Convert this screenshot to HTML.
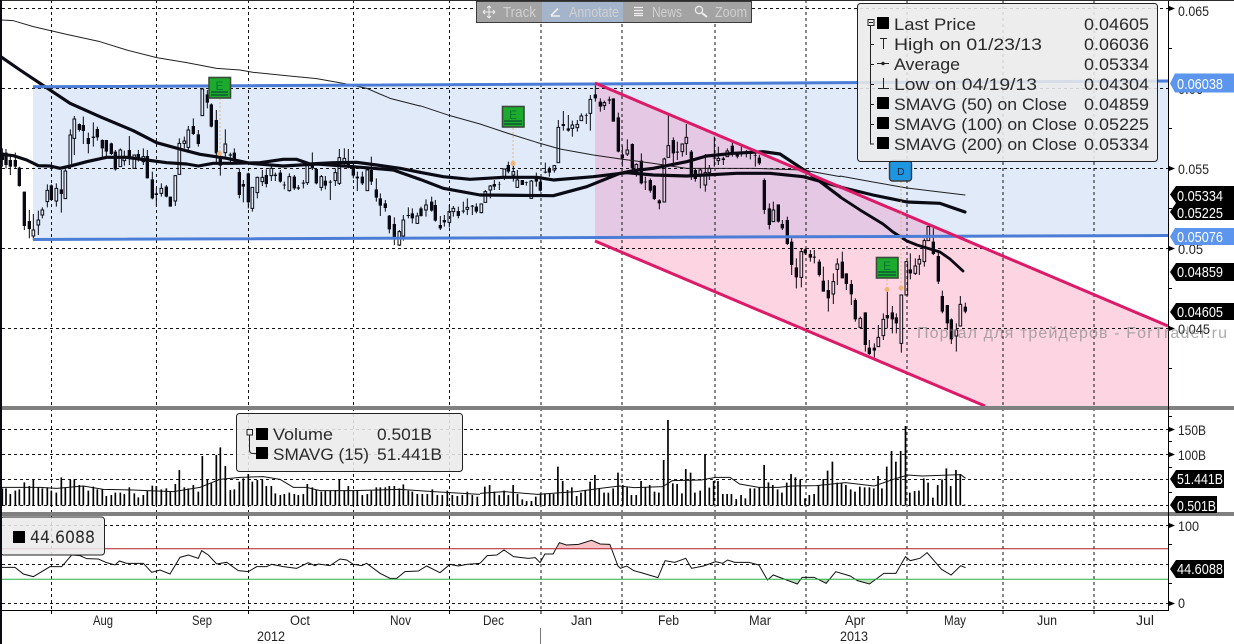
<!DOCTYPE html>
<html><head><meta charset="utf-8"><style>
html,body{margin:0;padding:0;background:#fff;width:1234px;height:644px;overflow:hidden}
svg{display:block}
text{font-family:"Liberation Sans","DejaVu Sans",sans-serif}
.l{font-size:17px;fill:#2a2a2a;font-family:"DejaVu Sans","Liberation Sans",sans-serif}
.a{font-size:14px;fill:#222}
.t{font-size:15px;fill:#fff}
.x{font-size:13.5px;fill:#222}
.b{font-size:15px;fill:#d0d0d0}
.ma{fill:none;stroke-linejoin:round;stroke-linecap:round}
</style></head><body>
<svg width="1234" height="644" viewBox="0 0 1234 644" xmlns="http://www.w3.org/2000/svg">
<rect width="1234" height="644" fill="#fff"/>
<!-- grid -->
<g stroke="#000" stroke-width="1" stroke-dasharray="3 3" fill="none" opacity=".92">
<path d="M2 8.5H1168M2 88.5H1168M2 168.5H1168M2 248.5H1168M2 328.5H1168M2 429.5H1168M2 454.5H1168M2 479.5H1168M2 505.5H1168M2 525.5H1168M2 564.5H1168M2 603.5H1168"/>
<path d="M51.5 0V610M156.5 0V610M248.5 0V610M353.5 0V610M449.5 0V610M541 0V610M622 0V610M715 0V610M806 0V610M907 0V610M1003 0V610M1094 0V610"/>
</g>
<!-- main candles part 1 -->
<g transform="scale(.33333)" fill="none">
<path stroke="#0a0a14" stroke-width="3" d="M7 445V500M18 447V505M31 465V525M46 458V505M58 500V560M73 575V690M88 630V715M154 553V602M184 510V638M238 370V395M250 350V432M265 398V460M280 367V440M292 380V422M307 418V472M319 420V470M334 428V465M346 450V512M388 408V495M415 450V485M442 450V535M457 515V598M469 565V620M499 555V592M511 590V620M580 355V405M595 390V440M622 270V325M634 310V382M649 330V490M661 465V527M691 458V487M703 445V490M718 505V595M730 540V607M745 518V625M799 508V562M826 518V543M841 510V548M853 545V568M883 525V570M895 555V570M910 540V565M937 457V510M949 505V553M976 528V568M991 540V600M1045 447V505M1060 490V535M1072 515V573M1087 515V555M1114 470V555M1129 535V605M1141 580V648M1156 600V635M1168 645V700M1183 652V735M1225 622V655M1237 625V670
M100 642V690M100 708V720M115 632V660M115 675V705M127 622V630M127 645V655M142 553V571M142 605V622M169 550V565M169 603V620M196 505V513M211 388V405M211 497V505M223 348V357M223 415V465M361 445V450M373 452V473M373 482V497M430 445V470M430 485V495M484 550V565M484 580V590M526 525V527M526 603V618M538 415V430M553 410V423M553 430V445M565 378V390M565 442V450M607 265V267M676 388V432M676 458V470M757 625V635M772 530V532M772 578V595M787 510V532M787 545V558M814 495V505M814 527V543M868 520V530M868 572V575M922 495V497M922 548V555M964 525V530M964 562V572M1006 505V518M1006 542V558M1018 447V473M1018 550V555M1033 445V475M1033 487V495M1102 505V510M1198 690V695M1198 735V738M1210 645V660M1210 708V722M1252 638V648M1252 670V672"/>
<path stroke="#0a0a14" stroke-width="10" d="M7 458V480M18 458V495M31 480V500M46 480V500M58 503V558M73 575V678M88 663V687M154 556V600M184 568V582M238 372V390M250 375V393M265 414V432M280 410V414M292 387V412M307 420V445M319 420V455M334 430V462M346 455V508M388 450V470M415 462V473M442 468V535M457 538V595M469 580V585M499 560V590M511 590V620M580 378V402M595 403V432M622 283V308M634 313V380M649 360V460M661 470V497M691 463V467M703 458V480M718 516V585M730 552V560M745 520V607M799 525V552M826 524V528M841 518V545M853 554V556M883 530V565M895 562V566M910 548V551M937 488V505M949 507V550M976 542V557M991 545V548M1045 485V500M1060 503V527M1072 530V535M1087 530V550M1114 510V545M1129 568V593M1141 595V617M1156 610V624M1168 647V688M1183 672V712M1225 645V648M1237 640V655"/>
<path stroke="#0a0a14" stroke-width="3" d="M96 690h8V708h-8zM111 660h8V675h-8zM123 630h8V645h-8zM138 571h8V605h-8zM165 565h8V603h-8zM192 513h8V596h-8zM207 405h8V497h-8zM219 357h8V415h-8zM357 450h8V500h-8zM369 473h8V482h-8zM399 465h8V505h-8zM426 470h8V485h-8zM480 565h8V580h-8zM522 527h8V603h-8zM534 430h8V523h-8zM549 423h8V430h-8zM561 390h8V442h-8zM603 267h8V347h-8zM672 432h8V458h-8zM753 562h8V625h-8zM768 532h8V578h-8zM783 532h8V545h-8zM810 505h8V527h-8zM864 530h8V572h-8zM918 497h8V548h-8zM960 530h8V562h-8zM1002 518h8V542h-8zM1014 473h8V550h-8zM1029 475h8V487h-8zM1098 510h8V572h-8zM1194 695h8V735h-8zM1206 660h8V708h-8zM1248 648h8V670h-8z"/>
</g>
<!-- main candles part 2 -->
<g transform="translate(420 0) scale(.33333)" fill="none">
<path stroke="#0a0a14" stroke-width="3" d="M3 620V650M35 590V635M46 600V665M61 648V690M73 645V680M115 620V655M130 605V640M157 615V645M169 610V640M223 540V570M238 545V570M265 485V520M307 540V555M319 545V557M349 518V560M361 535V575M376 488V520M388 500V530M430 333V392M445 345V395M499 340V372M526 255V305M541 295V335M568 290V312M580 295V365M595 338V457M607 437V500M637 430V510M664 460V553M676 530V570M691 535V578M703 555V600M718 598V628M760 412V490M772 425V480M814 450V540M826 505V545M883 410V500M910 470V495M937 425V470M952 455V475M964 440V470M979 450V472M991 455V478M1006 460V500M1018 465V495M1033 535V642M1048 610V688M1075 615V668M1087 660V690M1102 650V735
M18 598V615M18 630V650M88 615V635M88 667V682M100 618V625M100 635V650M142 595V622M142 628V645M184 610V612M184 638V640M196 570V575M211 555V558M211 570V595M253 505V507M253 533V540M280 490V515M280 525V545M292 510V540M334 540V543M403 495V497M403 510V518M415 360V382M457 362V375M457 385V410M472 360V373M472 383V395M484 340V348M511 285V298M511 340V392M553 302V308M553 317V330M622 418V450M622 462V468M649 490V493M649 515V530M733 473V477M745 345V437M787 430V432M787 455V470M799 372V412M799 430V465M841 505V510M841 525V565M856 462V518M856 555V575M868 495V505M868 518V540M895 440V475M895 482V495M922 445V453M1060 605V630"/>
<path stroke="#0a0a14" stroke-width="10" d="M3 625V648M35 605V632M46 615V662M61 675V685M73 660V667M115 633V648M130 632V635M157 617V620M169 620V635M223 552V560M238 552V553M265 495V515M307 540V555M319 547V549M349 530V545M361 545V572M376 515V518M388 507V518M430 372V378M445 385V392M499 345V347M526 283V295M541 305V320M568 298V302M580 295V365M595 352V455M607 463V475M637 432V505M664 482V550M676 545V547M691 540V572M703 557V597M718 601V610M760 420V460M772 455V458M814 455V530M826 510V537M883 473V475M910 475V480M937 437V460M952 458V470M964 458V463M979 458V462M991 460V462M1006 465V467M1018 473V490M1033 540V630M1048 625V675M1075 613V665M1087 672V685M1102 660V732"/>
<path stroke="#0a0a14" stroke-width="3" d="M14 615h8V630h-8zM84 635h8V667h-8zM96 625h8V635h-8zM138 622h8V628h-8zM180 612h8V638h-8zM192 575h8V607h-8zM207 558h8V570h-8zM249 507h8V533h-8zM276 515h8V525h-8zM288 540h8V562h-8zM330 543h8V595h-8zM399 497h8V510h-8zM411 382h8V488h-8zM453 375h8V385h-8zM468 373h8V383h-8zM480 348h8V362h-8zM507 298h8V340h-8zM549 308h8V317h-8zM618 450h8V462h-8zM645 493h8V515h-8zM729 477h8V606h-8zM741 437h8V472h-8zM783 432h8V455h-8zM795 412h8V430h-8zM837 510h8V525h-8zM852 518h8V555h-8zM864 505h8V518h-8zM891 475h8V482h-8zM918 453h8V470h-8zM1056 630h8V665h-8z"/>
</g>
<!-- main candles part 3 -->
<g transform="translate(760 200) scale(.33333)" fill="none">
<path stroke="#0a0a14" stroke-width="3" d="M95 115V225M109 175V265M136 145V165M151 150V185M163 150V190M178 178V230M190 200V275M205 240V335M247 155V235M259 220V270M274 240V315M286 295V365M316 337V455M328 420V465M343 430V472M382 268V385M397 318V400M409 340V400M451 160V238M520 85V165M535 150V252M547 272V340M562 315V390M574 355V432M616 308V340
M124 145V155M124 232V262M220 220V245M220 282V312M232 175V192M232 208V255M301 350V355M301 382V385M355 375V412M370 340V358M370 407V420M424 430V458M439 183V185M466 175V198M466 220V225M478 165V178M478 192V225M493 115V122M493 185V200M589 370V390M589 408V455M601 288V313M601 378V380"/>
<path stroke="#0a0a14" stroke-width="10" d="M95 125V195M109 202V232M136 148V160M151 162V173M163 170V173M178 185V225M190 242V275M205 270V295M247 185V235M259 220V252M274 252V283M286 300V358M316 337V435M328 443V462M343 443V452M382 345V355M397 337V358M409 352V370M451 208V220M520 125V162M535 168V245M547 288V335M562 315V370M574 358V418M616 320V335"/>
<path stroke="#0a0a14" stroke-width="3" d="M120 155h8V232h-8zM216 245h8V282h-8zM228 192h8V208h-8zM297 355h8V382h-8zM351 412h8V440h-8zM366 358h8V407h-8zM420 285h8V430h-8zM435 185h8V285h-8zM462 198h8V220h-8zM474 178h8V192h-8zM489 122h8V185h-8zM501 80h8V122h-8zM585 390h8V408h-8zM597 313h8V378h-8z"/>
</g>
<!-- moving averages -->
<g class="ma">
<g transform="scale(.33333)" stroke="#222">
<polyline stroke-width="3" points="5,60 40,62 100,80 200,103 300,125 380,150 470,173 560,188 650,205 720,210 760,217 850,226 950,236 1030,250 1100,265 1170,295 1260,318"/>
</g>
<g transform="translate(420 0) scale(.33333)" stroke="#222">
<polyline stroke-width="3" points="0,317 90,347 180,372 270,402 350,427 420,447 520,465 610,478 700,490 800,505 1000,505 1150,510 1260,530"/>
</g>
<polyline stroke="#222" stroke-width="1" points="840,176 873,182 907,188 940,192 965,195"/>
<g stroke="#0c0c16" stroke-width="9.5">
<polyline transform="scale(.33333)" points="5,463 40,467 80,480 115,497 150,498 180,505 215,497 260,485 320,472 380,472 440,480 500,488 560,492 595,498 640,490 700,490 780,488 850,478 890,478 930,492 1000,488 1070,487 1130,495 1200,505 1260,517"/>
<polyline transform="translate(420 0) scale(.33333)" points="0,517 70,530 150,538 250,532 350,532 400,540 520,530 620,518 700,525 800,528 950,520 1050,520 1150,530 1260,560"/>
<polyline transform="scale(.33333)" points="5,172 60,210 120,250 210,310 300,350 400,392 470,428 550,450 600,463 680,475 750,490 850,498 950,492 1060,500 1180,510 1260,538"/>
<polyline transform="translate(420 0) scale(.33333)" points="0,538 70,565 180,585 400,587 500,560 600,520 640,512 700,505 800,485 860,468 940,460 1030,455 1080,462 1160,515 1220,560 1260,590"/>
<polyline transform="scale(.33333)" points="2520,561 2619,585 2721,606 2820,610 2895,636"/>
<polyline stroke-width="8.5" transform="scale(.33333)" points="2520,591 2580,630 2649,672 2679,696 2721,723 2751,735 2820,756 2850,777 2889,813"/>
</g>
</g>
<!-- blue channel (without pink overlap) -->
<polygon points="33,87 595,84 595,237.8 33,240" fill="#e0eaf9" style="mix-blend-mode:multiply"/>
<polygon points="595,84 1168,81 1168,235.5 958,236.2 595,83" fill="#e0eaf9" style="mix-blend-mode:multiply"/>
<!-- overlap -->
<polygon points="595,83 958,236.2 595,237.8" fill="#e5c8e3" style="mix-blend-mode:multiply"/>
<!-- pink channel -->
<polygon points="595,237.8 958,236.2 1168,325 1168,406 985,406 595,241" fill="#fdd5e2" style="mix-blend-mode:multiply"/>
<path d="M33 86.8L1168 81M33 239.5L1168 235.5" stroke="#4c7dd6" stroke-width="3" fill="none"/>
<path d="M595 83L1168 326M595 241L985 406" stroke="#dc1a68" stroke-width="3" fill="none"/>
<!-- event connectors -->
<g stroke="#d9b98c" stroke-width="1" stroke-dasharray="2 2" fill="none"><path d="M220 98V153M513 128V164M887 279V289M901 181V288"/></g>
<g fill="#f0b678"><circle cx="219.5" cy="153.5" r="2.5"/><circle cx="513" cy="163.5" r="2.5"/><circle cx="887" cy="289.5" r="2.5"/><circle cx="901" cy="288" r="2.5"/></g>
<!-- events -->
<g>
<rect x="209" y="77.5" width="21.5" height="20.5" fill="#1cab2c" stroke="#3c4a3c" stroke-width="1.6"/><text x="215.5" y="90" font-size="12" fill="#073">E</text><path d="M211 92H228M211 95H228" stroke="#033" stroke-width="1"/>
<rect x="502.5" y="106.5" width="21.5" height="20.5" fill="#1cab2c" stroke="#3c4a3c" stroke-width="1.6"/><text x="509" y="119" font-size="12" fill="#073">E</text><path d="M504 121H522M504 124H522" stroke="#033" stroke-width="1"/>
<rect x="876.5" y="257.5" width="21.5" height="20.5" fill="#1cab2c" stroke="#3c4a3c" stroke-width="1.6"/><text x="883" y="270" font-size="12" fill="#073">E</text><path d="M878 272H896M878 275H896" stroke="#033" stroke-width="1"/>
<rect x="889.5" y="160.5" width="22" height="20.5" rx="3" fill="#1e96e2" stroke="#3a3a3a" stroke-width="1.4"/><text x="897" y="175" font-size="10.5" fill="#123">D</text>
</g>
<!-- volume bars -->
<g transform="translate(0 400) scale(.33333)" fill="none">
<path stroke="#000" stroke-width="5" d="M7 265V316M18 265V316M31 282V316M46 272V316M58 268V316M73 247V316M88 258V316M100 240V316M115 262V316M127 265V316M142 262V316M154 272V316M169 278V316M184 232V316M196 262V316M211 240V316M223 238V316M238 255V316M250 258V316M265 272V316M280 260V316M292 268V316M307 268V316M319 288V316M334 285V316M346 278V316M361 278V316M373 282V316M388 262V316M403 280V316M415 292V316M430 285V316M442 272V316M457 257V316M469 258V316M484 268V316M499 265V316M511 275V316M526 252V316M538 210V316M553 262V316M565 265V316M580 255V316M595 275V316M607 168V316M622 238V316M634 250V316M649 165V316M661 142V316M676 198V316M691 270V316M703 268V316M718 245V316M730 235V316M745 222V316M757 245V316M772 240V316M787 238V316M799 258V316M814 258V316M826 280V316M841 285V316M853 282V316M868 278V316M883 282V316M895 285V316M910 282V316M922 252V316M937 262V316M949 270V316M964 275V316M976 272V316M991 272V316M1006 270V316M1018 238V316M1033 272V316M1045 258V316M1060 272V316M1072 270V316M1087 285V316M1102 282V316M1114 272V316M1129 262V316M1141 262V316M1156 262V316M1168 258V316M1183 258V316M1198 265V316M1210 253V316M1225 272V316M1237 275V316M1252 282V316M1267 282V316M1282 282V316M1297 268V316M1312 285V316M1327 285V316M1342 272V316M1357 285V316M1372 288V316M1387 285V316M1402 275V316M1417 285V316M1432 290V316"/>
<polyline stroke="#111" stroke-width="3" points="5,262 60,262 120,262 170,265 250,258 310,268 400,270 440,272 520,275 600,262 660,238 720,232 790,230 840,238 880,262 920,262 960,272 1060,272 1200,268 1300,275 1440,283"/>
<polyline stroke="#111" stroke-width="3" points="5,502 45,502 70,522 100,530 150,500 185,500 215,465 240,467 260,476 295,477 320,488 345,495 358,483 380,490 430,490 455,517 480,510 510,522 540,472 565,465 595,475 605,452 625,465 650,492 680,487 715,512 745,515 770,500 800,500 815,493 850,500 890,505 925,488 945,497 955,492 990,497 1020,477 1040,480 1060,493 1085,497 1100,490 1140,520 1170,535 1190,535 1215,515 1255,513 1280,498 1320,518 1350,493 1375,498 1400,493 1440,490"/>
</g>
<g transform="translate(480 400) scale(.48077 .33333)" fill="none">
<path stroke="#000" stroke-width="3.5" d="M10 260V316M20 255V316M30 275V316M40 285V316M50 272V316M59 285V316M69 255V316M78 282V316M88 298V316M97 303V316M107 303V316M116 290V316M126 280V316M135 280V316M145 282V316M153 282V316M162 200V316M172 243V316M182 270V316M191 262V316M201 288V316M210 278V316M219 270V316M229 245V316M239 225V316M248 265V316M258 278V316M267 278V316M277 265V316M287 218V316M297 255V316M306 262V316M315 285V316M325 285V316M335 243V316M344 262V316M353 255V316M363 275V316M372 278V316M382 180V316M391 60V316M401 250V316M410 252V316M420 280V316M428 207V316M438 218V316M447 278V316M458 272V316M468 162V316M477 263V316M486 243V316M495 243V316M505 282V316M514 282V316M523 282V316M533 297V316M543 285V316M552 295V316M562 265V316M571 265V316M581 262V316M591 195V316M600 247V316M609 255V316M619 268V316M628 278V316M638 248V316M647 222V316M656 232V316M666 238V316M676 295V316M685 285V316M695 282V316M704 255V316M714 237V316M723 212V316M733 185V316M743 248V316M752 250V316M761 255V316M771 268V316M780 275V316M790 260V316M800 262V316M810 262V316M819 265V316M828 228V316M836 265V316M846 200V316M856 153V316M865 185V316M875 153V316M885 78V316M894 278V316M904 273V316M913 272V316M923 235V316M932 248V316M942 293V316M952 255V316M961 238V316M970 205V316M979 258V316M990 210V316M999 222V316M1008 314V316"/>
<polyline stroke="#111" stroke-width="1" vector-effect="non-scaling-stroke" points="0,280 50,275 120,283 170,278 200,275 250,265 290,258 320,263 380,260 400,242 460,240 490,232 520,232 540,252 580,262 620,262 650,258 700,257 760,248 820,258 860,238 890,225 920,228 1000,224 1010,235"/>
<polygon fill="#f8c4c6" points="161,446 165,428 180,435 205,433 232,421 250,432 270,433 273,446"/>
<polygon fill="#b8e4b8" points="596,538 598,540 604,538"/>
<polygon fill="#b8e4b8" points="640,538 660,552 666,538"/>
<polygon fill="#b8e4b8" points="706,538 720,550 727,538"/>
<polygon fill="#b8e4b8" points="775,538 785,542 810,552 825,538"/>
<path stroke="#111" stroke-width="1" vector-effect="non-scaling-stroke" d="M0 490L15 467 35 465 50 450 70 470 100 475 115 473 125 488 135 462 152 462 165 428 180 435 205 433 232 421 250 432 270 433 287 498 292 505 305 498 320 512 335 518 370 533 385 482 405 487 428 475 440 505 465 498 490 485 505 490 515 480 530 487 560 487 580 495 598 540 610 525 660 552 670 532 695 532 720 550 740 515 770 528 785 542 810 552 840 520 865 520 885 470 895 482 915 475 930 458 960 508 980 525 1000 497 1010 503"/>
</g>
<!-- RSI levels -->
<path d="M2 548.7H1168" stroke="#b01c2c" stroke-width="1" fill="none"/>
<path d="M2 579.3H1168" stroke="#28b040" stroke-width="1" fill="none"/>
<!-- panel separators -->
<rect x="0" y="406" width="1234" height="4" fill="#808080"/>
<rect x="0" y="512" width="1234" height="4" fill="#808080"/>
<!-- axes -->
<path d="M1168.5 0V610.5H0" stroke="#000" fill="none"/>
<path d="M51.5 610V614M156.5 610V614M248.5 610V614M353.5 610V614M449.5 610V614M541 610V614M622 610V614M715 610V614M806 610V614M907 610V614M1003 610V614M1094 610V614" stroke="#000" fill="none"/>
<path d="M1169 48.5H1172M1169 128.5H1172M1169 208.5H1172M1169 288.5H1172M1169 368.5H1172M1169 416.5H1172M1169 441.5H1172M1169 467.5H1172M1169 492.5H1172M1169 544.5H1172M1169 583.5H1172" stroke="#000" fill="none"/>
<g fill="#000"><path d="M1169 6L1175 8.5 1169 11zM1169 166L1175 168.5 1169 171zM1169 246L1175 248.5 1169 251zM1169 326L1175 328.5 1169 331zM1169 427L1175 429.5 1169 432zM1169 452L1175 454.5 1169 457zM1169 523L1175 525.5 1169 528zM1169 601L1175 603.5 1169 606z"/></g>
<g class="a">
<text x="1178" y="16" textLength="31" lengthAdjust="spacingAndGlyphs">0.065</text>
<text x="1178" y="94" textLength="25" lengthAdjust="spacingAndGlyphs">0.06</text>
<text x="1178" y="174" textLength="31" lengthAdjust="spacingAndGlyphs">0.055</text>
<text x="1178" y="254" textLength="25" lengthAdjust="spacingAndGlyphs">0.05</text>
<text x="1178" y="334" textLength="32" lengthAdjust="spacingAndGlyphs">0.045</text>
<text x="1178" y="435" textLength="28" lengthAdjust="spacingAndGlyphs">150B</text>
<text x="1178" y="460" textLength="28" lengthAdjust="spacingAndGlyphs">100B</text>
<text x="1178" y="531" textLength="21" lengthAdjust="spacingAndGlyphs">100</text>
<text x="1178" y="608" textLength="7" lengthAdjust="spacingAndGlyphs">0</text>
</g>
<!-- tags -->
<g>
<path d="M1170 83.5L1175 73.5H1234V92.5H1175z" fill="#5b95ee"/>
<path d="M1170 194.5L1176 186H1234V203H1176z" fill="#000"/>
<path d="M1170 212L1176 203H1234V220H1176z" fill="#000"/>
<path d="M1170 236.5L1175 228H1234V245H1175z" fill="#5b95ee"/>
<path d="M1170 272L1176 263H1234V281H1176z" fill="#000"/>
<path d="M1170 312L1176 303H1234V320H1176z" fill="#000"/>
<path d="M1170 479L1176 470H1224V488H1176z" fill="#000"/>
<path d="M1170 505L1176 496H1217V513H1176z" fill="#000"/>
<path d="M1170 569L1176 560H1224V578H1176z" fill="#000"/>
</g>
<g class="t">
<text x="1177" y="89" textLength="46" lengthAdjust="spacingAndGlyphs">0.06038</text>
<text x="1177" y="201" textLength="46" lengthAdjust="spacingAndGlyphs">0.05334</text>
<text x="1177" y="218" textLength="46" lengthAdjust="spacingAndGlyphs">0.05225</text>
<text x="1177" y="242" textLength="46" lengthAdjust="spacingAndGlyphs">0.05076</text>
<text x="1177" y="277" textLength="46" lengthAdjust="spacingAndGlyphs">0.04859</text>
<text x="1177" y="317" textLength="46" lengthAdjust="spacingAndGlyphs">0.04605</text>
<text x="1177" y="484" textLength="46" lengthAdjust="spacingAndGlyphs">51.441B</text>
<text x="1177" y="511" textLength="39" lengthAdjust="spacingAndGlyphs">0.501B</text>
<text x="1177" y="574" textLength="46" lengthAdjust="spacingAndGlyphs">44.6088</text>
</g>
<!-- watermark -->
<text x="917" y="338" font-size="16" fill="#8c8c8c" opacity=".72" textLength="310" lengthAdjust="spacing">Портал для трейдеров - ForTrader.ru</text>
<!-- x labels -->
<g class="x">
<text x="93" y="625" textLength="20" lengthAdjust="spacingAndGlyphs">Aug</text>
<text x="192" y="625" textLength="20" lengthAdjust="spacingAndGlyphs">Sep</text>
<text x="290" y="625" textLength="20" lengthAdjust="spacingAndGlyphs">Oct</text>
<text x="390" y="625" textLength="21" lengthAdjust="spacingAndGlyphs">Nov</text>
<text x="483" y="625" textLength="21" lengthAdjust="spacingAndGlyphs">Dec</text>
<text x="571" y="625" textLength="21" lengthAdjust="spacingAndGlyphs">Jan</text>
<text x="658" y="625" textLength="21" lengthAdjust="spacingAndGlyphs">Feb</text>
<text x="749" y="625" textLength="22" lengthAdjust="spacingAndGlyphs">Mar</text>
<text x="845" y="625" textLength="20" lengthAdjust="spacingAndGlyphs">Apr</text>
<text x="944" y="625" textLength="22" lengthAdjust="spacingAndGlyphs">May</text>
<text x="1037" y="625" textLength="20" lengthAdjust="spacingAndGlyphs">Jun</text>
<text x="1136" y="625" textLength="18" lengthAdjust="spacingAndGlyphs">Jul</text>
<text x="257" y="641" textLength="28" lengthAdjust="spacingAndGlyphs">2012</text>
<text x="840" y="641" textLength="28" lengthAdjust="spacingAndGlyphs">2013</text>
</g>
<path d="M540.5 628V644" stroke="#777" fill="none"/>
<!-- toolbar -->
<rect x="476.5" y="1.5" width="275" height="21" fill="#a3a3a3" stroke="#3c3c3c"/>
<rect x="542" y="2" width="81" height="20" fill="#a4b4ca"/>
<path d="M483 12H495M489 6V18M483 12l2-2M483 12l2 2M495 12l-2-2M495 12l-2 2M489 6l-2 2M489 6l2 2M489 18l-2-2M489 18l2-2" stroke="#eee" fill="none"/>
<path d="M551 15.5L558 8.5M551 16H560" stroke="#eee" stroke-width="1.6" fill="none"/>
<path d="M634 7.5H643M634 10.5H643M634 13.5H643M634 15.5H643" stroke="#eee" stroke-width="1.2" fill="none"/>
<circle cx="699" cy="10" r="3.6" stroke="#eee" stroke-width="1.2" fill="none"/>
<path d="M702 13L707 17" stroke="#eee" stroke-width="2" fill="none"/>
<g class="b">
<text x="503" y="17" textLength="33" lengthAdjust="spacingAndGlyphs">Track</text>
<text x="569" y="17" textLength="50" lengthAdjust="spacingAndGlyphs">Annotate</text>
<text x="652" y="17" textLength="30" lengthAdjust="spacingAndGlyphs">News</text>
<text x="715" y="17" textLength="32" lengthAdjust="spacingAndGlyphs">Zoom</text>
</g>
<!-- main legend -->
<rect x="857.5" y="3.5" width="300" height="158" rx="3" fill="#ebebeb" fill-opacity=".88" stroke="#222"/>
<path d="M870.5 26V144H874M870.5 44.5H874M870.5 64.5H874M870.5 84.5H874M870.5 104.5H874M870.5 124.5H874" stroke="#222" fill="none"/>
<rect x="868" y="19.5" width="6" height="6" fill="#eee" stroke="#222"/><path d="M869 22.5H873" stroke="#222"/>
<g fill="#000"><rect x="877" y="17" width="12" height="12"/><rect x="877" y="97" width="12" height="12"/><rect x="877" y="117" width="12" height="12"/><rect x="877" y="137" width="12" height="12"/></g>
<path d="M880 38.5H887M883.5 38.5V49M877 63.5H889M878 88.5H889M883.5 78V88" stroke="#222" fill="none"/><circle cx="883" cy="63.5" r="1.7" fill="#222"/>
<g class="l">
<text x="894" y="30" textLength="82" lengthAdjust="spacingAndGlyphs">Last Price</text>
<text x="894" y="50" textLength="148" lengthAdjust="spacingAndGlyphs">High on 01/23/13</text>
<text x="894" y="70" textLength="66" lengthAdjust="spacingAndGlyphs">Average</text>
<text x="894" y="90" textLength="143" lengthAdjust="spacingAndGlyphs">Low on 04/19/13</text>
<text x="894" y="110" textLength="173" lengthAdjust="spacingAndGlyphs">SMAVG (50) on Close</text>
<text x="894" y="130" textLength="183" lengthAdjust="spacingAndGlyphs">SMAVG (100) on Close</text>
<text x="894" y="150" textLength="183" lengthAdjust="spacingAndGlyphs">SMAVG (200) on Close</text>
<text x="1084" y="30" textLength="65" lengthAdjust="spacingAndGlyphs">0.04605</text>
<text x="1084" y="50" textLength="65" lengthAdjust="spacingAndGlyphs">0.06036</text>
<text x="1084" y="70" textLength="65" lengthAdjust="spacingAndGlyphs">0.05334</text>
<text x="1084" y="90" textLength="65" lengthAdjust="spacingAndGlyphs">0.04304</text>
<text x="1084" y="110" textLength="65" lengthAdjust="spacingAndGlyphs">0.04859</text>
<text x="1084" y="130" textLength="65" lengthAdjust="spacingAndGlyphs">0.05225</text>
<text x="1084" y="150" textLength="65" lengthAdjust="spacingAndGlyphs">0.05334</text>
</g>
<!-- volume legend -->
<rect x="236.5" y="413.5" width="226" height="58" rx="3" fill="#ebebeb" fill-opacity=".88" stroke="#222"/>
<path d="M249.5 435V450Q249.5 453.5 253 453.5H256" stroke="#222" fill="none"/>
<rect x="247" y="429.5" width="5.5" height="5.5" fill="#eee" stroke="#222"/>
<rect x="256" y="428" width="12" height="12" fill="#000"/><rect x="256" y="447" width="12" height="12" fill="#000"/>
<g class="l">
<text x="273" y="440" textLength="60" lengthAdjust="spacingAndGlyphs">Volume</text>
<text x="273" y="460" textLength="96" lengthAdjust="spacingAndGlyphs">SMAVG (15)</text>
<text x="377" y="440" textLength="55" lengthAdjust="spacingAndGlyphs">0.501B</text>
<text x="377" y="460" textLength="65" lengthAdjust="spacingAndGlyphs">51.441B</text>
</g>
<!-- RSI legend -->
<rect x="0.5" y="517" width="104" height="38" rx="3" fill="#ebebeb" fill-opacity=".88" stroke="#222"/>
<rect x="13" y="531" width="12" height="12" fill="#000"/>
<text class="l" x="30" y="543" textLength="65" lengthAdjust="spacingAndGlyphs">44.6088</text>
<!-- frame -->
<rect x="0" y="0" width="1234" height="1" fill="#2c2c2c"/>
<rect x="0" y="0" width="2" height="644" fill="#0a0a12"/>
</svg>
</body></html>
